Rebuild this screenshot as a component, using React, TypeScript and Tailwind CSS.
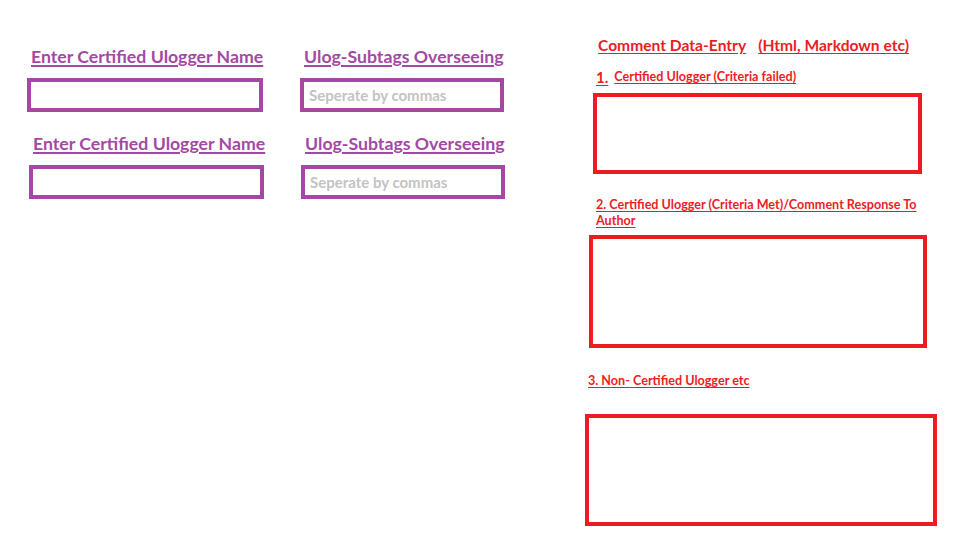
import React from 'react';

const purple = 'text-[#a349a4]';

const Field = ({ label, placeholder, className }: { label: string; placeholder?: string; className: string }) => (
    <div className={className}>
        <div className={`${purple} font-bold text-[17.7px] leading-[20px] underline underline-offset-2 decoration-[1.5px] whitespace-nowrap pl-1`}>{label}</div>
        <div className="mt-[11px] h-[34px] border-[4px] border-[#a349a4] flex items-center pl-[5px]">
            {placeholder && <span className="text-[#c3c3c3] font-bold text-[15px]">{placeholder}</span>}
        </div>
    </div>
);

const RedLabel = ({ children, className }: React.PropsWithChildren<{ className: string }>) => (
    <div className={`text-[#ed1c24] font-bold underline underline-offset-2 ${className}`}>{children}</div>
);

const RedBox = ({ className }: { className: string }) => (
    <div className={`border-[4px] border-[#ed1c24] ${className}`} />
);

export default function App() {
    return (
        <div className="w-[960px] h-[540px] bg-white flex font-['Lato','Liberation_Sans',sans-serif] overflow-hidden">
            <div className="w-[585px] pt-[47px]">
                <div className="flex">
                    <Field className="ml-[27px] w-[236px]" label="Enter Certified Ulogger Name" />
                    <Field className="ml-[37px] w-[204px]" label="Ulog-Subtags Overseeing" placeholder="Seperate by commas" />
                </div>
                <div className="flex mt-[22px]">
                    <Field className="ml-[29px] w-[235px]" label="Enter Certified Ulogger Name" />
                    <Field className="ml-[37px] w-[204px]" label="Ulog-Subtags Overseeing" placeholder="Seperate by commas" />
                </div>
            </div>
            <div className="flex-1 flex flex-col pt-[35px]">
                <RedLabel className="ml-[13px] text-[15.6px] leading-[20px] whitespace-nowrap">
                    Comment Data-Entry<span className="inline-block w-[12px]" />(Html, Markdown etc)
                </RedLabel>
                <RedLabel className="ml-[11px] mt-[14px] text-[12.6px] leading-[16px] whitespace-nowrap flex items-end">
                    <span className="text-[15px] mr-[6px]">1.</span>Certified Ulogger (Criteria failed)
                </RedLabel>
                <RedBox className="ml-[8px] mt-[8px] w-[329px] h-[81px]" />
                <RedLabel className="ml-[11px] mt-[23px] w-[340px] text-[12.6px] leading-[16px]">
                    2. Certified Ulogger (Criteria Met)/Comment Response To Author
                </RedLabel>
                <RedBox className="ml-[4px] mt-[6px] w-[338px] h-[113px]" />
                <RedLabel className="ml-[3px] mt-[25px] text-[12.6px] leading-[16px] whitespace-nowrap">
                    3. Non- Certified Ulogger etc
                </RedLabel>
                <RedBox className="mt-[25px] w-[352px] h-[112px]" />
            </div>
        </div>
    );
}
